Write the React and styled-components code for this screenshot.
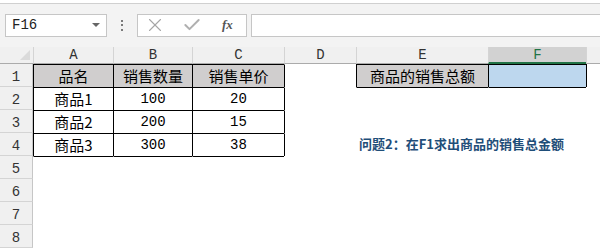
import React from "react";
import styled, { createGlobalStyle } from "styled-components";
import { X, Check } from "lucide-react";

const GlobalStyle = createGlobalStyle`
  html, body { margin: 0; padding: 0; background: #fff; }
  body { width: 600px; height: 250px; overflow: hidden; }
`;

const COLS = ["A", "B", "C", "D", "E", "F"];
const SELECTED_COL = 5;

const DATA = [
  ["品名", "销售数量", "销售单价", "", "商品的销售总额", ""],
  ["商品1", "100", "20", "", "", ""],
  ["商品2", "200", "15", "", "", ""],
  ["商品3", "300", "38", "", "问题2：在F1求出商品的销售总金额", ""],
  ["", "", "", "", "", ""],
  ["", "", "", "", "", ""],
  ["", "", "", "", "", ""],
  ["", "", "", "", "", ""],
];

// which cells sit inside the black-bordered tables
const boxed = (r, c) => (r >= 0 && r <= 3 && c >= 0 && c <= 2) || (r === 0 && (c === 4 || c === 5));

const fillOf = (r, c) => {
  if (r === 0 && (c <= 2 || c === 4)) return "#d0cece";
  if (r === 0 && c === 5) return "#bdd7ee";
  return "transparent";
};

const Page = styled.div`
  width: 600px;
  height: 250px;
  overflow: hidden;
  background: #fff;
`;

const Toolbar = styled.div`
  display: flex;
  align-items: center;
  height: 44px;
  margin-top: 3px;
  padding: 10px 0 11px 5px;
  box-sizing: border-box;
  background: #f3f3f3;
  border-top: 1px solid #d0d0d0;
`;

const NameBox = styled.div`
  display: flex;
  align-items: center;
  justify-content: space-between;
  width: 102px;
  height: 23px;
  box-sizing: border-box;
  padding: 0 6px;
  background: #fff;
  border: 1px solid #c6c6c6;
  font-family: "Liberation Mono", monospace;
  font-size: 14px;
  color: #222;
`;

const Caret = styled.span`
  width: 0;
  height: 0;
  border-left: 4px solid transparent;
  border-right: 4px solid transparent;
  border-top: 4px solid #666;
`;

const Grip = styled.div`
  display: flex;
  flex-direction: column;
  gap: 2.5px;
  margin: 0 14px;
  span {
    width: 2px;
    height: 2px;
    background: #7a7a7a;
  }
`;

const FuncButtons = styled.div`
  display: flex;
  align-items: center;
  width: 110px;
  height: 23px;
  box-sizing: border-box;
  padding: 0 6px 0 6px;
  gap: 16px;
  background: #fff;
  border: 1px solid #c6c6c6;
`;

const Fx = styled.span`
  margin-left: 4px;
  font-family: "Liberation Serif", serif;
  font-style: italic;
  font-weight: bold;
  font-size: 13px;
  color: #555;
`;

const FormulaInput = styled.div`
  flex: 1;
  height: 23px;
  margin-left: 4px;
  box-sizing: border-box;
  background: #fff;
  border: 1px solid #c6c6c6;
  border-right: none;
`;

const Sheet = styled.div`
  display: grid;
  grid-template-columns: 33px 80px 79px 92px 72px 132px 98px 1fr;
  grid-template-rows: 17px repeat(8, 23px);
`;

const Corner = styled.div`
  position: relative;
  background: #f0f0f0;
  border-bottom: 1px solid #ababab;
  box-sizing: border-box;
  &::after {
    content: "";
    position: absolute;
    right: 3px;
    bottom: 3px;
    width: 0;
    height: 0;
    border-left: 10px solid transparent;
    border-bottom: 10px solid #dadada;
  }
`;

const ColHeader = styled.div`
  display: flex;
  align-items: center;
  justify-content: center;
  box-sizing: border-box;
  background: ${({ $active }) => ($active ? "#d2d2d2" : "#f0f0f0")};
  border-left: 1px solid #d4d4d4;
  border-bottom: ${({ $active }) => ($active ? "2px solid #217346" : "1px solid #ababab")};
  color: ${({ $active }) => ($active ? "#217346" : "#333")};
  font-family: "Liberation Mono", monospace;
  font-size: 14px;
  line-height: 1;
`;

const RowHeader = styled.div`
  display: flex;
  align-items: flex-end;
  justify-content: center;
  box-sizing: border-box;
  padding-bottom: 2px;
  background: #f0f0f0;
  border-bottom: 1px solid #d4d4d4;
  border-right: 1px solid #c6c6c6;
  color: #333;
  font-family: "Liberation Mono", monospace;
  font-size: 14px;
  line-height: 1;
`;

const Cell = styled.div`
  display: flex;
  align-items: flex-end;
  justify-content: ${({ $align }) => $align};
  box-sizing: border-box;
  padding: 0 2px 1px;
  min-width: 0;
  white-space: nowrap;
  overflow: visible;
  background: ${({ $fill }) => $fill};
  border-left: 1px solid ${({ $l }) => ($l ? "#000" : "transparent")};
  border-top: 1px solid ${({ $t }) => ($t ? "#000" : "transparent")};
  font-family: ${({ $num }) =>
    $num ? '"Liberation Mono", monospace' : '"Noto Sans CJK SC", sans-serif'};
  font-size: ${({ $num }) => ($num ? "14px" : "15px")};
  line-height: 20px;
  color: #000;
`;

const Note = styled.span`
  position: relative;
  z-index: 1;
  padding-bottom: 2px;
  font-family: "Noto Sans CJK SC", sans-serif;
  font-weight: bold;
  font-size: 13px;
  line-height: 18px;
  color: #1f4e79;
`;

const Filler = styled.div`
  box-sizing: border-box;
  border-left: 1px solid ${({ $l }) => ($l ? "#000" : "transparent")};
`;

const HeaderFiller = styled.div`
  background: #f0f0f0;
  border-left: 1px solid #d4d4d4;
  border-bottom: 1px solid #ababab;
  box-sizing: border-box;
`;

export default function App() {
  return (
    <Page>
      <GlobalStyle />
      <Toolbar>
        <NameBox>
          F16
          <Caret />
        </NameBox>
        <Grip>
          <span />
          <span />
          <span />
        </Grip>
        <FuncButtons>
          <X size={22} strokeWidth={1.2} color="#a6a6a6" />
          <Check size={20} strokeWidth={2.4} color="#b0b0b0" />
          <Fx>fx</Fx>
        </FuncButtons>
        <FormulaInput />
      </Toolbar>

      <Sheet>
        <Corner />
        {COLS.map((c, i) => (
          <ColHeader key={c} $active={i === SELECTED_COL}>
            {c}
          </ColHeader>
        ))}
        <HeaderFiller />

        {DATA.map((row, r) => (
          <React.Fragment key={r}>
            <RowHeader>{r + 1}</RowHeader>
            {row.map((val, c) => {
              const l = boxed(r, c) || boxed(r, c - 1);
              const t = boxed(r, c) || boxed(r - 1, c);
              const isNote = r === 3 && c === 4;
              return (
                <Cell
                  key={c}
                  $l={l}
                  $t={t}
                  $fill={fillOf(r, c)}
                  $align={isNote ? "flex-start" : "center"}
                  $num={/^\d+$/.test(val)}
                >
                  {isNote ? <Note>{val}</Note> : val}
                </Cell>
              );
            })}
            <Filler $l={boxed(r, 5)} />
          </React.Fragment>
        ))}
      </Sheet>
    </Page>
  );
}
